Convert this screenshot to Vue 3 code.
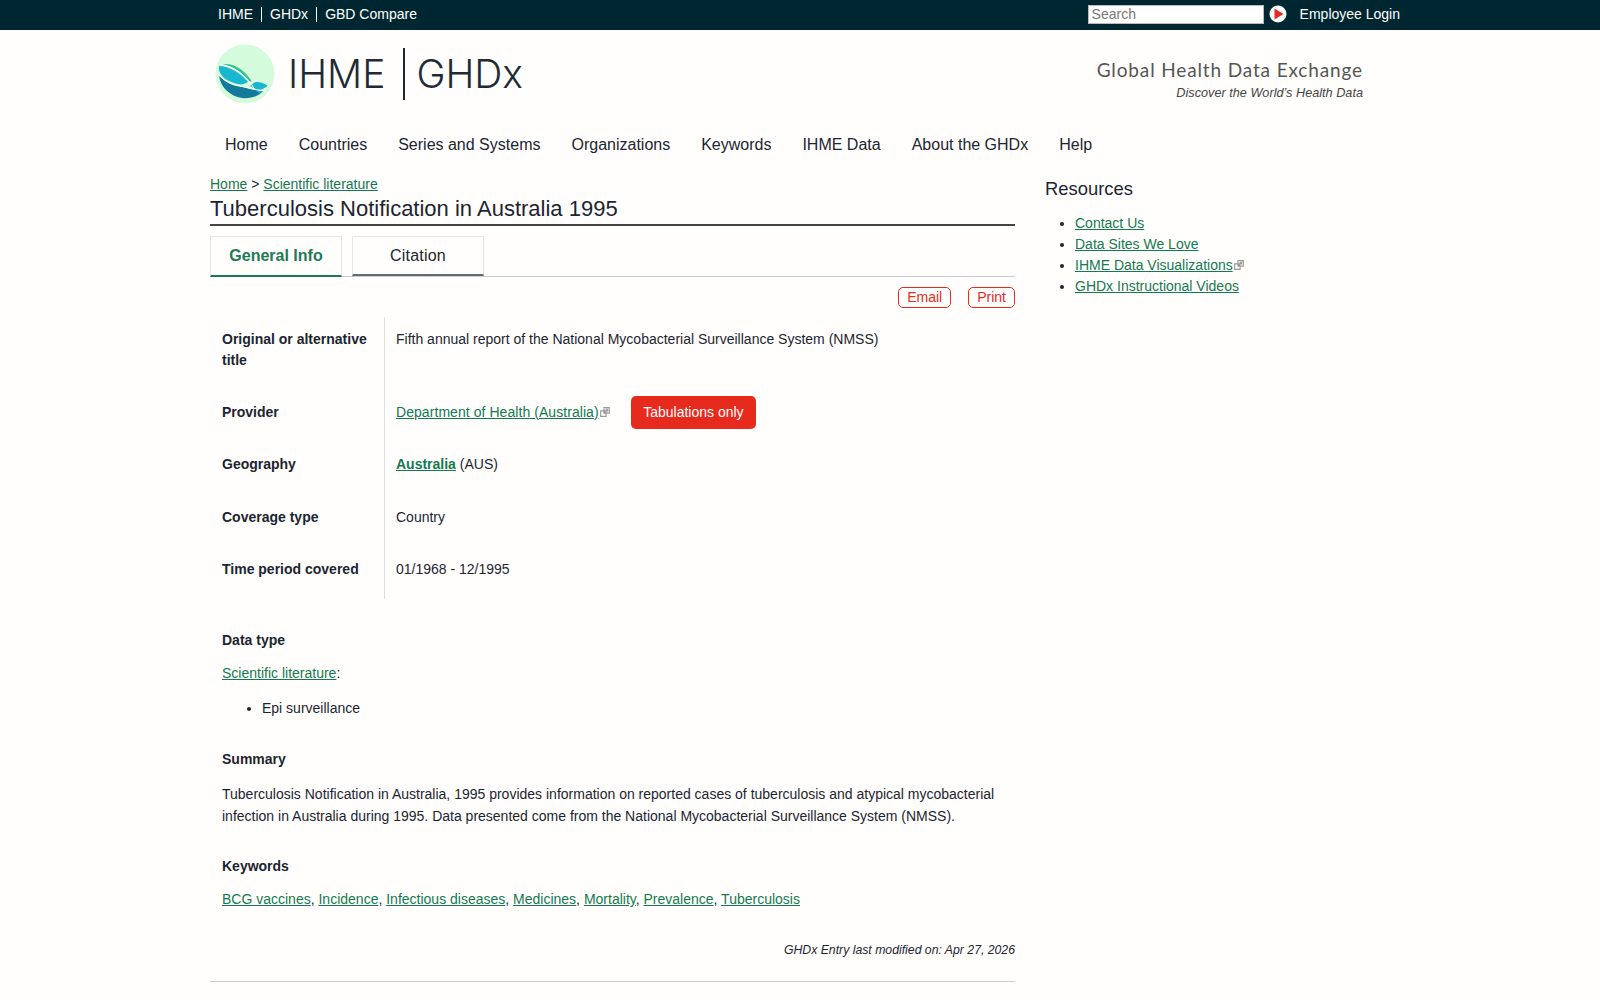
<script setup>
const navItems = ['Home', 'Countries', 'Series and Systems', 'Organizations', 'Keywords', 'IHME Data', 'About the GHDx', 'Help']
const keywords = ['BCG vaccines', 'Incidence', 'Infectious diseases', 'Medicines', 'Mortality', 'Prevalence', 'Tuberculosis']
</script>

<template>
  <div class="topbar">
    <div class="topbar-links">
      <a>IHME</a>
      <a>GHDx</a>
      <a>GBD Compare</a>
    </div>
    <div class="topbar-right">
      <input class="search" type="text" placeholder="Search">
      <svg class="go" width="18" height="18" viewBox="0 0 18 18">
        <circle cx="9" cy="9" r="8.5" fill="#fff" />
        <path d="M5.5 3.5 L14.5 9 L5.5 14.5 Z" fill="#e62a1e" />
      </svg>
      <a class="login">Employee Login</a>
    </div>
  </div>

  <div class="page">
    <header class="brand">
      <div class="logo">
        <svg class="mark" width="60" height="60" viewBox="0 0 60 60">
          <circle cx="30" cy="30" r="29.5" fill="#d4fbdc" />
          <path d="M4 32 C8 36 16 41 23 42 C30 43 40 47 48 47 C44 52 36 55 27 54 C15 52 6 44 4 32 Z" fill="#137b99" />
          <path d="M4 22 C13 22 25 28 33 38 C30 40 26 41 23 40 C14 38 6 34 4 26 Z" fill="#17b8cf" />
          <path d="M8 20 C20 19 31 27 37 38 L34 37 C28 29 19 23 8 20 Z" fill="#2cc58a" />
          <path d="M35 42 C38 39 41 37 44 38 C47 39 51 40 53 42 C50 45 47 46 44 46 C41 45 38 44 35 42 Z" fill="#17b8cf" />
          <path d="M39 45 L48 47 L44 49 Z" fill="#17b8cf" />
          <path d="M3 30 C9 37 17 41 24 42 C31 43 40 46 50 47 M6 21 C18 22 31 30 40 46 M33 40 C38 37 42 36 45 38 M44 47 C47 46 51 44 53 42" fill="none" stroke="#fff" stroke-width="1" />
        </svg>
        <span class="logo-name">IHME</span>
        <span class="logo-sep"></span>
        <span class="logo-name">GHDx</span>
      </div>
      <div class="tagline">
        <div class="tagline-main">Global Health Data Exchange</div>
        <div class="tagline-sub">Discover the World’s Health Data</div>
      </div>
    </header>

    <nav class="mainnav">
      <a v-for="item in navItems" :key="item">{{ item }}</a>
    </nav>

    <div class="columns">
      <main class="content">
        <div class="crumbs"><a class="link">Home</a> &gt; <a class="link">Scientific literature</a></div>
        <h1>Tuberculosis Notification in Australia 1995</h1>

        <div class="tabs">
          <div class="tab active">General Info</div>
          <div class="tab">Citation</div>
        </div>

        <div class="actions">
          <a class="pill">Email</a>
          <a class="pill">Print</a>
        </div>

        <table class="info">
          <tbody>
            <tr class="first">
              <th>Original or alternative title</th>
              <td>Fifth annual report of the National Mycobacterial Surveillance System (NMSS)</td>
            </tr>
            <tr>
              <th>Provider</th>
              <td>
                <div class="provider">
                  <span>
                    <a class="link wide">Department of Health (Australia)</a>
                    <svg class="ext" width="12" height="12" viewBox="0 0 11 11">
                      <path d="M4.5 1.5h5v5h-5z M1.5 4.5h5v5h-5z M5 6 L8 3 M6 3h2v2" fill="none" stroke="#999" stroke-width="1" />
                    </svg>
                  </span>
                  <span class="badge">Tabulations only</span>
                </div>
              </td>
            </tr>
            <tr>
              <th>Geography</th>
              <td><a class="link strong">Australia</a> (AUS)</td>
            </tr>
            <tr>
              <th>Coverage type</th>
              <td>Country</td>
            </tr>
            <tr>
              <th>Time period covered</th>
              <td>01/1968 - 12/1995</td>
            </tr>
          </tbody>
        </table>

        <section class="block data-type">
          <h3>Data type</h3>
          <p><a class="link">Scientific literature</a>:</p>
          <ul><li>Epi surveillance</li></ul>
        </section>

        <section class="block summary">
          <h3>Summary</h3>
          <p>Tuberculosis Notification in Australia, 1995 provides information on reported cases of tuberculosis and atypical mycobacterial infection in Australia during 1995. Data presented come from the National Mycobacterial Surveillance System (NMSS).</p>
        </section>

        <section class="block">
          <h3>Keywords</h3>
          <p>
            <template v-for="(word, i) in keywords" :key="word">
              <a class="link">{{ word }}</a><span v-if="i < keywords.length - 1">, </span>
            </template>
          </p>
        </section>

        <div class="modified">GHDx Entry last modified on: Apr 27, 2026</div>
        <hr class="foot-rule">
      </main>

      <aside class="sidebar">
        <h2>Resources</h2>
        <ul>
          <li><a class="link">Contact Us</a></li>
          <li><a class="link">Data Sites We Love</a></li>
          <li>
            <a class="link">IHME Data Visualizations</a>
            <svg class="ext" width="12" height="12" viewBox="0 0 11 11">
              <path d="M4.5 1.5h5v5h-5z M1.5 4.5h5v5h-5z M5 6 L8 3 M6 3h2v2" fill="none" stroke="#999" stroke-width="1" />
            </svg>
          </li>
          <li><a class="link">GHDx Instructional Videos</a></li>
        </ul>
      </aside>
    </div>
  </div>
</template>

<style>
html, body {
  background: #fffefd;
}
</style>

<style scoped>
.topbar {
  height: 30px;
  background: #002731;
  color: #fff;
  display: flex;
  justify-content: space-between;
  align-items: center;
  padding: 0 201px 2px 210px;
  box-sizing: border-box;
  font: 14px "Liberation Sans", Arial, sans-serif;
}

.topbar-links {
  display: flex;
  align-items: center;
}

.topbar-links a {
  padding: 0 8px;
  line-height: 15px;
  border-left: 1px solid #fff;
}

.topbar-links a:first-child {
  border-left: none;
}

.topbar-right {
  display: flex;
  align-items: center;
}

.search {
  width: 176px;
  height: 19px;
  box-sizing: border-box;
  border: 1px solid #bbb;
  padding: 0 3px;
  font: 14px "Liberation Sans", Arial, sans-serif;
  background: #fff;
  outline: none;
}

.search::placeholder {
  color: #777;
}

.go {
  margin-left: 5px;
}

.login {
  margin-left: 13px;
  margin-right: -1px;
}

.page {
  width: 1160px;
  margin-left: 210px;
  color: #1c2530;
  font: 14px/21.4px "Liberation Sans", Arial, sans-serif;
}

.brand {
  display: flex;
  justify-content: space-between;
  align-items: center;
  height: 88px;
  padding-right: 7px;
}

.logo {
  display: flex;
  align-items: center;
  padding-left: 5px;
}

.mark {
  margin-right: 13px;
}

.logo-name {
  font: 300 39px/52px Inter, sans-serif;
  color: #1d2b36;
}

.logo-sep {
  width: 2px;
  height: 52px;
  background: #1d2b36;
  margin: 0 11px 0 18px;
}

.tagline {
  text-align: right;
  padding-top: 10px;
}

.tagline-main {
  font: 19px/26px Lato, sans-serif;
  letter-spacing: 0.86px;
  color: #555;
  margin-bottom: 1px;
}

.tagline-sub {
  font: italic 12.7px/18px "Liberation Sans", Arial, sans-serif;
  color: #444;
}

.mainnav {
  display: flex;
  gap: 31px;
  padding: 15px 0 0 15px;
  font-size: 16px;
  line-height: 24px;
}

.columns {
  display: flex;
  gap: 30px;
  margin-top: 17px;
}

.content {
  width: 805px;
}

.link {
  color: #137a50;
  text-decoration: underline;
}

.wide {
  letter-spacing: 0.06px;
}

.strong {
  font-weight: 700;
}

.crumbs {
  line-height: 20px;
}

h1 {
  margin: 0;
  padding: 1px 0 2px;
  font-size: 22px;
  line-height: 27px;
  font-weight: 400;
  border-bottom: 2px solid #444;
}

.tabs {
  display: flex;
  gap: 10px;
  margin-top: 10px;
  border-bottom: 1px solid #ccc;
  height: 40px;
}

.tab {
  width: 132px;
  height: 40px;
  box-sizing: border-box;
  border: 1px solid #e6e6e6;
  border-bottom: 2px solid #5f6d72;
  text-align: center;
  font-size: 16px;
  line-height: 38px;
  letter-spacing: 0.2px;
}

.tab.active {
  height: 41px;
  color: #1d7a55;
  font-weight: 700;
  letter-spacing: 0;
  border-bottom-color: #1d7a55;
}

.actions {
  display: flex;
  justify-content: flex-end;
  gap: 17px;
  margin-top: 10px;
}

.pill {
  border: 1px solid #e62a1e;
  border-radius: 5px;
  color: #e62a1e;
  padding: 0 8px;
  line-height: 19px;
}

.info {
  border-collapse: collapse;
  margin-top: 9px;
}

.info th {
  width: 150px;
  padding: 12px 12px 19px;
  text-align: left;
  vertical-align: top;
  border-right: 1px solid #ddd;
}

.info td {
  padding: 12px 11px 19px;
  vertical-align: top;
}

.info .first th,
.info .first td {
  padding-bottom: 18px;
}

.provider {
  display: flex;
  align-items: center;
  gap: 20px;
  height: 21px;
}

.ext {
  vertical-align: -1px;
}

.badge {
  background: #e62a1e;
  color: #fff;
  border-radius: 5px;
  padding: 6px 12.5px;
  line-height: 21px;
}

.block {
  padding: 0 12px;
  margin-top: 29px;
}

.block h3 {
  margin: 0 0 12px;
  font-size: 14px;
  line-height: 21px;
}

.block p {
  margin: 0;
}

.block ul {
  margin: 13px 0 0;
  padding-left: 40px;
}

.data-type {
  margin-top: 31px;
}

.summary {
  margin-top: 30px;
}

.summary h3 {
  margin-bottom: 14px;
}

.modified {
  margin-top: 30px;
  text-align: right;
  font-style: italic;
  font-size: 12.25px;
}

.foot-rule {
  margin: 19px 0 0;
  border: none;
  border-top: 1px solid #ccc;
}

.sidebar {
  flex: 1;
  padding-top: 2px;
}

.sidebar h2 {
  margin: 0;
  font-size: 18.4px;
  line-height: 26px;
  font-weight: 400;
}

.sidebar ul {
  margin: 11px 0 0;
  padding-left: 30px;
  line-height: 21px;
}
</style>
